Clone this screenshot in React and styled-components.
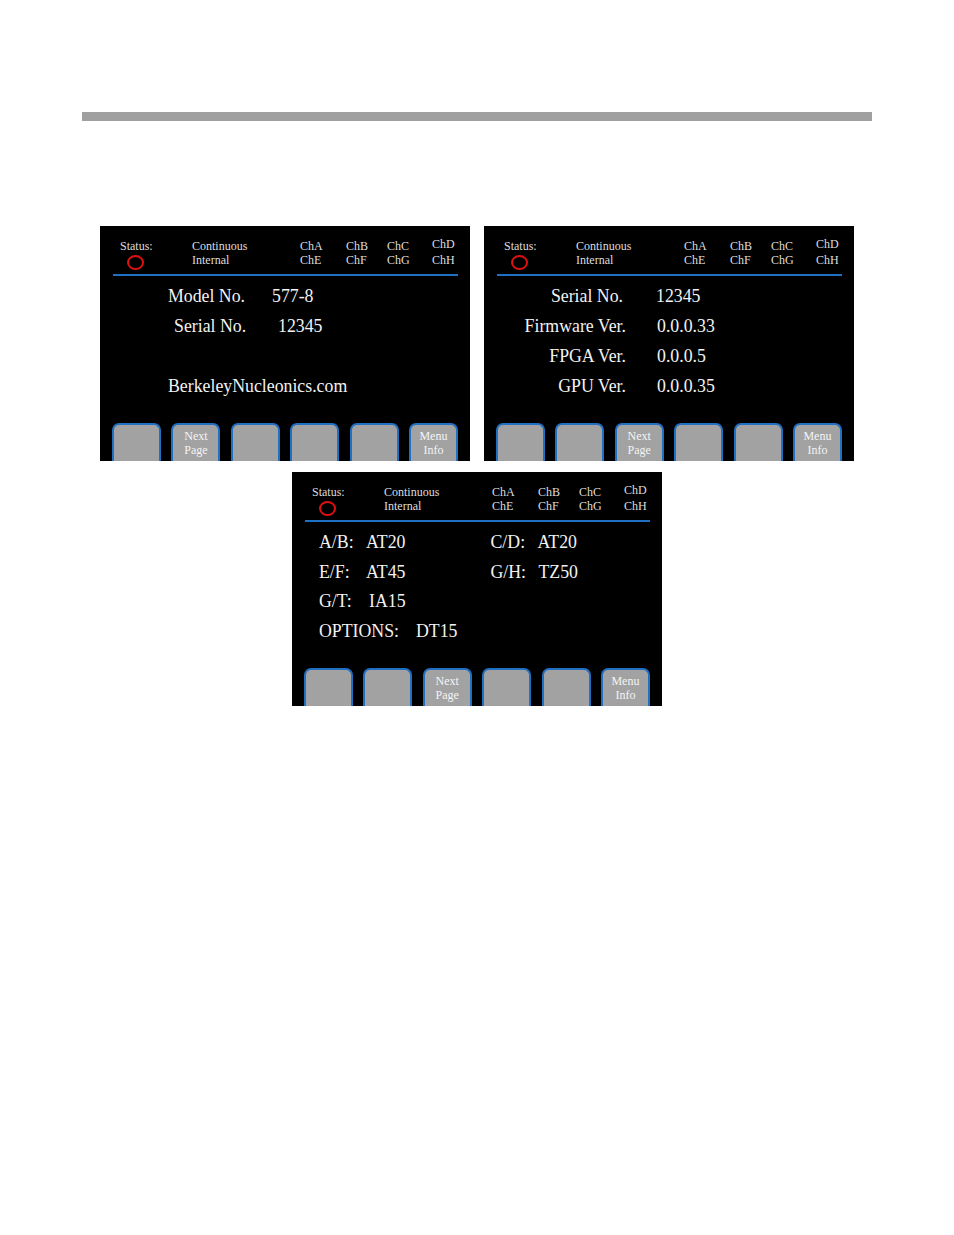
import React from 'react';
import styled, { createGlobalStyle } from 'styled-components';

const GlobalStyle = createGlobalStyle`
  html, body {
    margin: 0;
    padding: 0;
    background: #ffffff;
  }
  body {
    font-family: "Liberation Serif", "Times New Roman", serif;
  }
`;

const Page = styled.div`
  width: 954px;
  min-height: 1235px;
  padding-top: 112px;
  box-sizing: border-box;
`;

const TopRule = styled.div`
  margin-left: 82px;
  width: 790px;
  height: 9px;
  background: #a0a0a0;
`;

const Screens = styled.div`
  margin-top: 105px;
  display: flex;
  flex-direction: column;
  align-items: center;
  gap: 11px;
`;

const ScreenRow = styled.div`
  display: flex;
  gap: 14px;
`;

const Screen = styled.div`
  width: 370px;
  height: ${(p) => p.$h || 235}px;
  background: #000;
  overflow: hidden;
  display: flex;
  flex-direction: column;
  color: #f2f2f2;
`;

const Header = styled.div`
  margin: 0 12px 0 13px;
  padding: 13px 0 0 7px;
  height: 35px;
  border-bottom: 2px solid #1f6fc2;
  display: grid;
  grid-template-columns: 72px 108px 46px 41px 45px auto;
  font-size: 12px;
  line-height: 14px;
  color: #dedede;
`;

const HeadCol = styled.div`
  display: flex;
  flex-direction: column;
  margin-top: ${(p) => p.$up || 0}px;
`;

const StatusDot = styled.div`
  margin: 2px 0 0 7px;
  width: 13px;
  height: 11px;
  border: 2px solid #e01010;
  border-radius: 50%;
`;

const Body = styled.div`
  flex: 1;
  padding-top: 5px;
  font-size: 17.8px;
  line-height: 30px;
`;

const Line = styled.div`
  display: flex;
  padding-left: ${(p) => p.$indent || 0}px;
  height: ${(p) => p.$h || 30}px;
`;

const Label = styled.span`
  display: inline-block;
  width: ${(p) => p.$w}px;
  text-align: ${(p) => p.$align || 'left'};
  padding-right: ${(p) => p.$pr || 0}px;
  box-sizing: border-box;
  white-space: nowrap;
`;

const Value = styled.span`
  padding-left: ${(p) => p.$pl || 0}px;
  white-space: nowrap;
`;

const Pair = styled.div`
  width: ${(p) => p.$w || 172}px;
  display: flex;
`;

const Buttons = styled.div`
  display: flex;
  justify-content: space-between;
  padding: 0 12px;
  height: 38px;
`;

const SoftKey = styled.div`
  width: 45px;
  height: 40px;
  background: #a2a2a2;
  border: 2px solid #1f6fc2;
  border-bottom: none;
  border-radius: 7px 7px 0 0;
  color: #f4f4f4;
  font-size: 12px;
  line-height: 14px;
  text-align: center;
  padding-top: 4px;
  box-sizing: content-box;
`;

const ScreenHeader = () => (
  <Header>
    <HeadCol>
      <span>Status:</span>
      <StatusDot />
    </HeadCol>
    <HeadCol>
      <span>Continuous</span>
      <span>Internal</span>
    </HeadCol>
    <HeadCol>
      <span>ChA</span>
      <span>ChE</span>
    </HeadCol>
    <HeadCol>
      <span>ChB</span>
      <span>ChF</span>
    </HeadCol>
    <HeadCol>
      <span>ChC</span>
      <span>ChG</span>
    </HeadCol>
    <HeadCol $up={-2}>
      <span>ChD</span>
      <span style={{ marginTop: 2 }}>ChH</span>
    </HeadCol>
  </Header>
);

const KeyRow = ({ keys }) => (
  <Buttons>
    {keys.map((k, i) => (
      <SoftKey key={i}>
        {k &&
          k.split('|').map((t) => (
            <div key={t}>{t}</div>
          ))}
      </SoftKey>
    ))}
  </Buttons>
);

const App = () => (
  <Page>
    <GlobalStyle />
    <TopRule />
    <Screens>
      <ScreenRow>
        <Screen>
          <ScreenHeader />
          <Body>
            <Line $indent={68}>
              <Label $w={104}>Model No.</Label>
              <Value>577-8</Value>
            </Line>
            <Line $indent={74}>
              <Label $w={104}>Serial No.</Label>
              <Value>12345</Value>
            </Line>
            <Line />
            <Line $indent={68}>
              <Label $w={200}>BerkeleyNucleonics.com</Label>
            </Line>
          </Body>
          <KeyRow keys={['', 'Next|Page', '', '', '', 'Menu|Info']} />
        </Screen>
        <Screen>
          <ScreenHeader />
          <Body>
            <Line>
              <Label $w={142} $align="right" $pr={3}>Serial No.</Label>
              <Value $pl={30}>12345</Value>
            </Line>
            <Line>
              <Label $w={142} $align="right">Firmware Ver.</Label>
              <Value $pl={31}>0.0.0.33</Value>
            </Line>
            <Line>
              <Label $w={142} $align="right">FPGA Ver.</Label>
              <Value $pl={31}>0.0.0.5</Value>
            </Line>
            <Line>
              <Label $w={142} $align="right">GPU Ver.</Label>
              <Value $pl={31}>0.0.0.35</Value>
            </Line>
          </Body>
          <KeyRow keys={['', '', 'Next|Page', '', '', 'Menu|Info']} />
        </Screen>
      </ScreenRow>
      <ScreenRow>
        <Screen $h={234}>
          <ScreenHeader />
          <Body>
            <Line $indent={27} $h={29.5}>
              <Pair>
                <Label $w={47}>A/B:</Label>
                <Value>AT20</Value>
              </Pair>
              <Pair>
                <Label $w={47}>C/D:</Label>
                <Value>AT20</Value>
              </Pair>
            </Line>
            <Line $indent={27} $h={29.5}>
              <Pair>
                <Label $w={47}>E/F:</Label>
                <Value>AT45</Value>
              </Pair>
              <Pair>
                <Label $w={48}>G/H:</Label>
                <Value>TZ50</Value>
              </Pair>
            </Line>
            <Line $indent={27} $h={29.5}>
              <Pair>
                <Label $w={50}>G/T:</Label>
                <Value>IA15</Value>
              </Pair>
            </Line>
            <Line $indent={27} $h={29.5}>
              <Pair $w={300}>
                <Label $w={97}>OPTIONS:</Label>
                <Value>DT15</Value>
              </Pair>
            </Line>
          </Body>
          <KeyRow keys={['', '', 'Next|Page', '', '', 'Menu|Info']} />
        </Screen>
      </ScreenRow>
    </Screens>
  </Page>
);

export default App;
